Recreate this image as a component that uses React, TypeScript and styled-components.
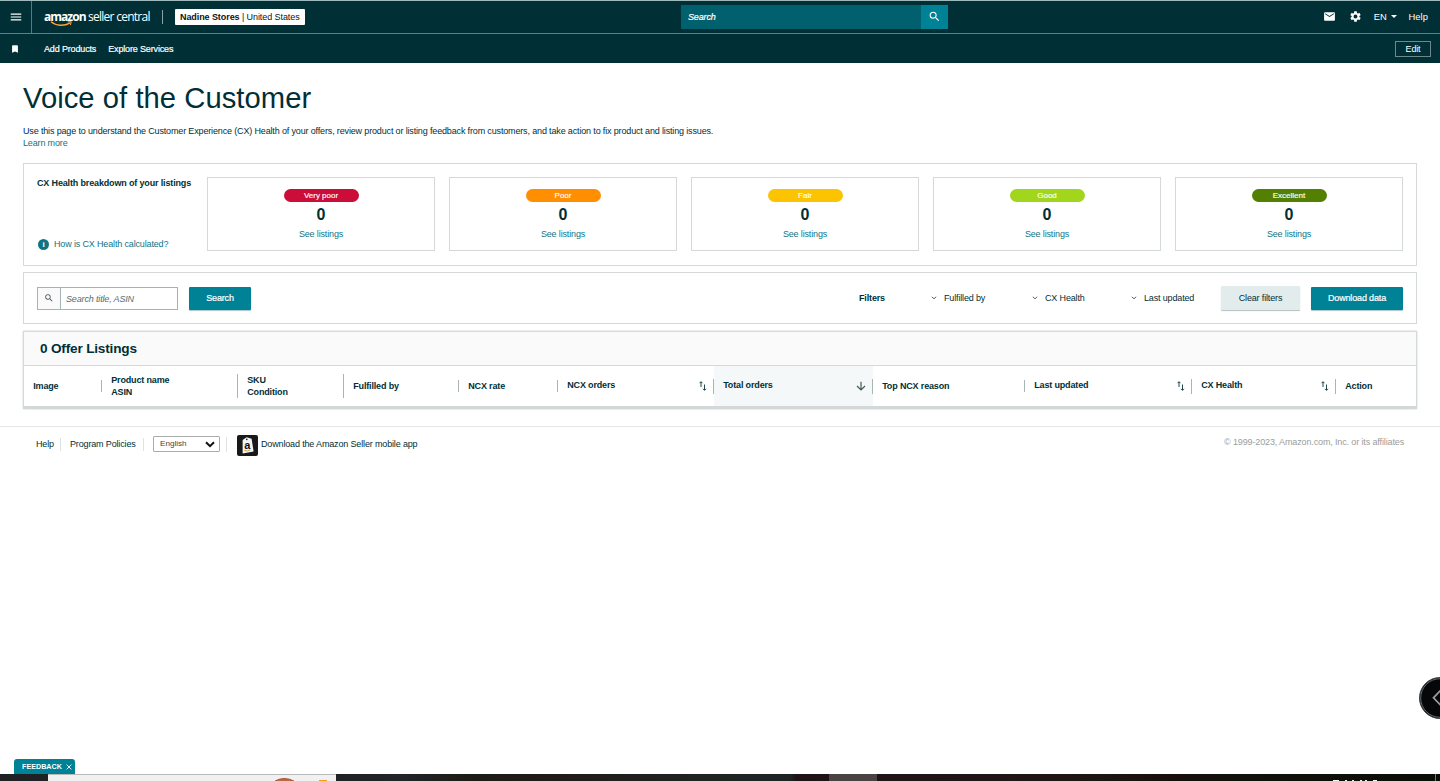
import React from "react";
import styled, { createGlobalStyle } from "styled-components";
import { MdMenu, MdEmail, MdSettings, MdSearch, MdBookmark } from "react-icons/md";

const GlobalStyle = createGlobalStyle`
  *, *::before, *::after { box-sizing: border-box; }
  body { margin: 0; background: #fff; overflow: hidden; }
  body, button, input { font-family: "Liberation Sans", Arial, sans-serif; }
`;

const INK = "#002f36";
const LINK = "#127483";
const TEAL = "#008296";
const LINE = "#d5d9d9";

const Page = styled.div`
  position: relative;
  display: flex;
  flex-direction: column;
  width: 1440px;
  height: 781px;
  overflow: hidden;
  color: ${INK};
  font-size: 9px;
  letter-spacing: -0.152px;
  line-height: 12px;
  white-space: nowrap;
`;

const TopBar = styled.header`
  display: flex;
  align-items: center;
  height: 34px;
  flex: none;
  padding-bottom: 1px;
  background: #002f36;
  border-top: 1px solid #9db9bb;
  border-bottom: 1px solid #60807f;
  color: #fff;
`;

const MenuButton = styled.div`
  display: flex;
  align-items: center;
  justify-content: center;
  width: 32px;
  height: 32px;
  margin-bottom: -1px;
  padding-bottom: 1px;
  border-right: 1px solid #5b7779;
`;

const Logo = styled.div`
  position: relative;
  display: flex;
  gap: 3px;
  width: 119px;
  padding-left: 12px;
  height: 18px;
  line-height: 17px;
  font-family: "Open Sans", sans-serif;
  font-size: 12px;
`;

const LogoName = styled.span`
  width: 41px;
  font-weight: 700;
  letter-spacing: -0.98px;
`;

const LogoSub = styled.span`
  letter-spacing: -0.73px;
`;

const Smile = styled.svg`
  position: absolute;
  left: 18px;
  top: 12px;
`;

const LogoDivider = styled.div`
  width: 1px;
  height: 14px;
  margin: 0 12px 0 11px;
  background: #8da2a4;
`;

const StorePicker = styled.div`
  width: 130px;
  height: 16px;
  margin-top: 1px;
  padding-left: 5px;
  border-radius: 1px;
  background: #fff;
  color: #0c1516;
  font-size: 9px;
  letter-spacing: -0.08px;
  line-height: 16px;
`;

const GlobalSearch = styled.div`
  display: flex;
  width: 267px;
  height: 24px;
  margin: 1px 0 0 376px;
  background: #00606e;
`;

const GlobalSearchText = styled.span`
  flex: 1;
  padding-left: 7px;
  font-style: italic;
  line-height: 24px;
  -webkit-text-stroke: 0.2px #fff;
`;

const GlobalSearchButton = styled.div`
  display: flex;
  align-items: center;
  justify-content: center;
  width: 27px;
  padding-bottom: 2px;
  background: ${TEAL};
`;

const TopActions = styled.div`
  display: flex;
  align-items: center;
  margin-left: auto;
  padding-right: 12px;
  font-size: 9.4px;
`;

const ActionIcon = styled.span`
  display: flex;
  margin-right: 13px;
`;

const Language = styled.span`
  display: flex;
  align-items: center;
  gap: 4px;
  margin: 0 12px 0 -1px;
`;

const Caret = styled.span`
  border: 3px solid transparent;
  border-top-color: #fff;
  border-bottom: 0;
`;

const HelpLink = styled.span`
  letter-spacing: 0.05px;
`;

const SubBar = styled.nav`
  display: flex;
  align-items: center;
  height: 29px;
  flex: none;
  padding: 0 9px 0 10px;
  background: #002f36;
  color: #fff;
`;

const SavedPages = styled.span`
  display: flex;
  width: 34px;
`;

const SubLink = styled.span`
  margin-right: 12px;
  -webkit-text-stroke: 0.2px #fff;
`;

const EditButton = styled.div`
  width: 36px;
  height: 16px;
  margin-left: auto;
  border: 1px solid #6d898b;
  line-height: 14px;
  text-align: center;
`;

const Main = styled.main`
  display: flex;
  flex-direction: column;
  padding: 18px 23px 0;
`;

const Title = styled.h1`
  margin: 0;
  height: 44px;
  font-size: 29.2px;
  font-weight: 400;
  letter-spacing: 0.05px;
  line-height: 34px;
`;

const Intro = styled.p`
  margin: 0;
  height: 38px;
`;

const Link = styled.a`
  color: ${LINK};
`;

const Panel = styled.section<{ $h: number }>`
  display: flex;
  height: ${(p) => p.$h}px;
  border: 1px solid ${LINE};
`;

const Breakdown = styled.div`
  display: flex;
  flex-direction: column;
  justify-content: space-between;
  width: 183px;
  padding: 13px 0 15px 13px;
`;

const Help = styled.div`
  display: flex;
  align-items: center;
  gap: 5px;
  color: ${LINK};
`;

const InfoDot = styled.span`
  width: 11px;
  height: 11px;
  margin-left: 1px;
  border-radius: 50%;
  background: #127483;
  color: #fff;
  font-size: 8px;
  font-weight: 700;
  line-height: 11px;
  text-align: center;
`;

const Cards = styled.div`
  display: grid;
  grid-template-columns: repeat(5, 228px);
  gap: 14px;
  padding-top: 13px;
`;

const Card = styled.div`
  display: flex;
  flex-direction: column;
  align-items: center;
  height: 74px;
  padding-top: 11px;
  border: 1px solid ${LINE};
`;

const Pill = styled.span<{ $c: string }>`
  width: 75px;
  height: 13px;
  border-radius: 7px;
  background: ${(p) => p.$c};
  color: #fff;
  font-size: 8px;
  letter-spacing: 0;
  line-height: 13px;
  text-align: center;
  -webkit-text-stroke: 0.15px #fff;
`;

const Count = styled.strong`
  margin: 3px 0;
  font-size: 16px;
  letter-spacing: 0;
  line-height: 20px;
`;

const Toolbar = styled(Panel)`
  align-items: center;
  margin: 6px 0 7px;
  padding: 0 13px;
`;

const SearchField = styled.div`
  display: flex;
  width: 141px;
  height: 23px;
  border: 1px solid #a4b3b4;
`;

const FieldIcon = styled.span`
  display: flex;
  align-items: center;
  justify-content: center;
  width: 23px;
  border-right: 1px solid #a4b3b4;
  background: #fafafa;
`;

const Placeholder = styled.span`
  padding-left: 5px;
  color: #566c70;
  font-style: italic;
  line-height: 22px;
`;

const Button = styled.button<{ $w: number; $quiet?: boolean }>`
  width: ${(p) => p.$w}px;
  height: ${(p) => (p.$quiet ? 24 : 23)}px;
  margin: 0 0 0 11px;
  padding: 0 0 1px;
  border: 0;
  border-radius: 1px;
  background: ${(p) => (p.$quiet ? "#e3eced" : TEAL)};
  box-shadow: 0 1px 1px ${(p) => (p.$quiet ? "#b5bfc0" : "#a9c6ca")};
  color: ${(p) => (p.$quiet ? INK : "#fff")};
  font-size: 9px;
  letter-spacing: -0.152px;
  -webkit-text-stroke: ${(p) => (p.$quiet ? "0" : "0.2px #fff")};
`;

const FilterLabel = styled.strong`
  margin-left: auto;
  width: 72px;
`;

const Filter = styled.span<{ $w: number }>`
  display: flex;
  align-items: center;
  gap: 7px;
  width: ${(p) => p.$w}px;
`;

const Listings = styled.section`
  height: 78px;
  border: 1px solid ${LINE};
  border-bottom: 3px solid #d3d7d7;
  box-shadow: 0 0 2px #c9cdcd;
`;

const ListingsTitle = styled.h2`
  height: 34px;
  margin: 0;
  padding-left: 16px;
  border-bottom: 1px solid ${LINE};
  background: #fafafa;
  font-size: 13.6px;
  letter-spacing: -0.18px;
  line-height: 33px;
`;

const HeadRow = styled.div`
  display: grid;
  grid-template-columns: 78px 136px 106px 115px 99px 156px 159px 152px 167px 144px 80px;
  height: 40px;
  font-weight: 700;
`;

const HeadCell = styled.div<{ $sorted?: boolean; $rule: number }>`
  display: flex;
  align-items: center;
  justify-content: space-between;
  padding-left: 9.2px;
  background: linear-gradient(#a9b4b5, #a9b4b5) right center / 1px ${(p) => p.$rule}px no-repeat
    ${(p) => (p.$sorted ? ", #f4f8f9" : "")};
`;

const HeadText = styled.span<{ $up?: boolean }>`
  padding-bottom: ${(p) => (p.$up ? 2 : 0)}px;
`;

const SortIcon = styled.svg`
  margin-right: 7px;
`;

const Footer = styled.footer`
  display: flex;
  align-items: center;
  height: 35px;
  margin-top: 17px;
  padding: 0 36px;
  border-top: 1px solid #e4e6e6;
`;

const FooterItem = styled.span<{ $w: number }>`
  width: ${(p) => p.$w}px;
  margin-right: 9px;
  line-height: 13px;
  border-right: 1px solid #dfe3e3;
`;

const Select = styled.div`
  display: flex;
  align-items: center;
  justify-content: space-between;
  width: 67px;
  height: 16px;
  padding: 0 4px 0 6px;
  border: 1px solid #a9adad;
  border-radius: 1px;
  color: #444;
  font-size: 8.1px;
  letter-spacing: 0;
`;

const FooterRule = styled.span`
  width: 1px;
  height: 15px;
  margin: 0 10px 0 6px;
  background: #dfe3e3;
`;

const AppLink = styled.span`
  display: flex;
  align-items: center;
  gap: 3px;
  height: 22px;
`;

const AppIcon = styled.svg`
  margin-top: 3px;
`;

const Copyright = styled.span`
  margin: -4px 0 0 auto;
  color: #9a9d9d;
  letter-spacing: -0.13px;
`;

const DrawerHandle = styled.div`
  position: absolute;
  left: 1419px;
  top: 677px;
`;

const Feedback = styled.div`
  display: flex;
  align-items: center;
  gap: 4px;
  width: 61px;
  height: 15px;
  margin: auto 0 0 14px;
  padding-left: 8px;
  border-radius: 3px 3px 0 0;
  background: ${TEAL};
  color: #fff;
  font-size: 7.2px;
  font-weight: 700;
  letter-spacing: 0;
`;

const Taskbar = styled.div`
  display: flex;
  flex: none;
  height: 7px;
  background: linear-gradient(90deg, #202124 0 336px, #222428 400px, #1c1b17 470px, #211a1a 560px, #1f2322 700px, #1e2425 790px, #1f1317 796px, #211417 1000px, #1c1512 1100px, #190d0e 1170px, #10120a 1240px, #0a0c06 1440px);
`;

const TaskSearch = styled.div`
  width: 288px;
  margin-left: 48px;
  border-top: 1px solid #b9b9b9;
  background: #f1f1f1;
`;

const TaskActive = styled.div`
  width: 48px;
  margin-left: 493px;
  background: #4b4244;
`;

const TaskClock = styled.svg`
  margin-left: auto;
`;

const health = [
  ["Very poor", "#cc0c39"],
  ["Poor", "#ff8f00"],
  ["Fair", "#fcc400"],
  ["Good", "#a1d61c"],
  ["Excellent", "#538000"],
];

type Column = { lines: string[]; rule: number; sort?: "both" | "down" };

const columns: Column[] = [
  { lines: ["Image"], rule: 12 },
  { lines: ["Product name", "ASIN"], rule: 24 },
  { lines: ["SKU", "Condition"], rule: 24 },
  { lines: ["Fulfilled by"], rule: 12 },
  { lines: ["NCX rate"], rule: 12 },
  { lines: ["NCX orders"], rule: 15, sort: "both" },
  { lines: ["Total orders"], rule: 15, sort: "down" },
  { lines: ["Top NCX reason"], rule: 12 },
  { lines: ["Last updated"], rule: 15, sort: "both" },
  { lines: ["CX Health"], rule: 15, sort: "both" },
  { lines: ["Action"], rule: 0 },
];

const SortBoth = () => (
  <SortIcon width="8" height="12" viewBox="0 0 8 12" fill="none" stroke="#22454b" strokeWidth="1">
    <path d="M2 7V2M.6 3.2 2 1.6 3.4 3.2M5.5 4.5v5.5M4 8.8l1.5 1.6L7 8.8" />
  </SortIcon>
);

const SortDown = () => (
  <SortIcon width="10" height="10" viewBox="0 0 10 10" fill="none" stroke="#43585c" strokeWidth="1.2">
    <path d="M5 .8v8M1 5l4 4 4-4" />
  </SortIcon>
);

const FilterItem = ({ label, width }: { label: string; width: number }) => (
  <Filter $w={width}>
    <svg width="6" height="4" viewBox="0 0 6 4" fill="none" stroke="#52686b">
      <path d="M.8.8 3 2.8 5.2.8" />
    </svg>
    {label}
  </Filter>
);

export default function App() {
  return (
    <Page>
      <GlobalStyle />
      <TopBar>
        <MenuButton><MdMenu size={14} /></MenuButton>
        <Logo>
          <LogoName>amazon</LogoName>
          <LogoSub>seller central</LogoSub>
          <Smile width="24" height="7" viewBox="0 0 24 7" fill="none" stroke="#ffa42e">
            <path d="M1 1.8C6 6 14 6.4 20.2 2.8" strokeWidth="1.4" />
            <path d="M17.6 1.9 21.3 1.7 20.4 5" strokeWidth="1" />
          </Smile>
        </Logo>
        <LogoDivider />
        <StorePicker><b>Nadine Stores</b> | United States</StorePicker>
        <GlobalSearch>
          <GlobalSearchText>Search</GlobalSearchText>
          <GlobalSearchButton><MdSearch size={13} /></GlobalSearchButton>
        </GlobalSearch>
        <TopActions>
          <ActionIcon><MdEmail size={13} /></ActionIcon>
          <ActionIcon><MdSettings size={13} /></ActionIcon>
          <Language>EN <Caret /></Language>
          <HelpLink>Help</HelpLink>
        </TopActions>
      </TopBar>
      <SubBar>
        <SavedPages><MdBookmark size={10} /></SavedPages>
        <SubLink>Add Products</SubLink>
        <SubLink>Explore Services</SubLink>
        <EditButton>Edit</EditButton>
      </SubBar>

      <Main>
        <Title>Voice of the Customer</Title>
        <Intro>
          Use this page to understand the Customer Experience (CX) Health of your offers, review product or listing
          feedback from customers, and take action to fix product and listing issues.
          <br />
          <Link>Learn more</Link>
        </Intro>

        <Panel $h={103}>
          <Breakdown>
            <strong>CX Health breakdown of your listings</strong>
            <Help><InfoDot>i</InfoDot>How is CX Health calculated?</Help>
          </Breakdown>
          <Cards>
            {health.map(([label, color]) => (
              <Card key={label}>
                <Pill $c={color}>{label}</Pill>
                <Count>0</Count>
                <Link>See listings</Link>
              </Card>
            ))}
          </Cards>
        </Panel>

        <Toolbar $h={52}>
          <SearchField>
            <FieldIcon><MdSearch size={10} color="#43585c" /></FieldIcon>
            <Placeholder>Search title, ASIN</Placeholder>
          </SearchField>
          <Button $w={62}>Search</Button>
          <FilterLabel>Filters</FilterLabel>
          <FilterItem label="Fulfilled by" width={101} />
          <FilterItem label="CX Health" width={99} />
          <FilterItem label="Last updated" width={79} />
          <Button $w={79} $quiet>Clear filters</Button>
          <Button $w={92}>Download data</Button>
        </Toolbar>

        <Listings>
          <ListingsTitle>0 Offer Listings</ListingsTitle>
          <HeadRow>
            {columns.map((c) => (
              <HeadCell key={c.lines[0]} $rule={c.rule} $sorted={c.sort === "down"}>
                <HeadText $up={!!c.sort}>
                  {c.lines.map((l) => <div key={l}>{l}</div>)}
                </HeadText>
                {c.sort === "both" && <SortBoth />}
                {c.sort === "down" && <SortDown />}
              </HeadCell>
            ))}
          </HeadRow>
        </Listings>
      </Main>

      <Footer>
        <FooterItem $w={25}>Help</FooterItem>
        <FooterItem $w={74}>Program Policies</FooterItem>
        <Select>
          English
          <svg width="10" height="7" viewBox="0 0 10 7" fill="none" stroke="#111" strokeWidth="2">
            <path d="M1 1.2 5 5.2 9 1.2" />
          </svg>
        </Select>
        <FooterRule />
        <AppLink>
          <AppIcon width="21" height="21" viewBox="0 0 21 21">
            <rect width="21" height="21" rx="2" fill="#17191a" />
            <path d="M5.6 5 9.6 2.2l5 1.6 2 12.8-11 1.8Z" fill="#f4f4f2" />
            <circle cx="9.8" cy="4.4" r=".8" fill="#17191a" />
            <text x="7.2" y="13.6" fontSize="11" fontWeight="700" fill="#111">a</text>
            <path d="M7.4 15.4q3 1.3 6-.5" fill="none" stroke="#d99a4a" strokeWidth=".9" />
          </AppIcon>
          Download the Amazon Seller mobile app
        </AppLink>
        <Copyright>© 1999-2023, Amazon.com, Inc. or its affiliates</Copyright>
      </Footer>

      <Feedback>
        FEEDBACK
        <svg width="6" height="6" viewBox="0 0 6 6" stroke="#fff" strokeWidth=".9">
          <path d="M.6.6l4.8 4.8M5.4.6.6 5.4" />
        </svg>
      </Feedback>
      <Taskbar>
        <TaskSearch>
          <svg width="288" height="6" viewBox="0 0 288 6" display="block">
            <path d="M227 6Q236 1 246 6" fill="#b96a45" stroke="#a5532f" />
            <rect x="271" y="5" width="8" height="2" fill="#f59a12" />
          </svg>
        </TaskSearch>
        <TaskActive />
        <TaskClock width="110" height="7" viewBox="0 0 110 7" fill="#f2f2f2">
          <path d="M3 6h6v1H3zM15 6h2v1h-2zM22 6h2v1h-2zM30 6h2v1h-2zM35 6h2v1h-2zM43 6h4v1h-4z" />
          <path d="M105 0h1v7h-1z" fill="#777" />
        </TaskClock>
      </Taskbar>

      <DrawerHandle>
        <svg width="21" height="42" viewBox="0 0 21 42" display="block">
          <circle cx="21" cy="21" r="20.5" fill="#050708" stroke="#3a4245" />
          <circle cx="21" cy="21" r="19.3" fill="none" stroke="#8c9496" strokeWidth=".7" />
          <path d="M22 13 14.5 20.8 22 28.6" fill="none" stroke="#9a9a9a" strokeWidth="1.8" />
        </svg>
      </DrawerHandle>
    </Page>
  );
}
